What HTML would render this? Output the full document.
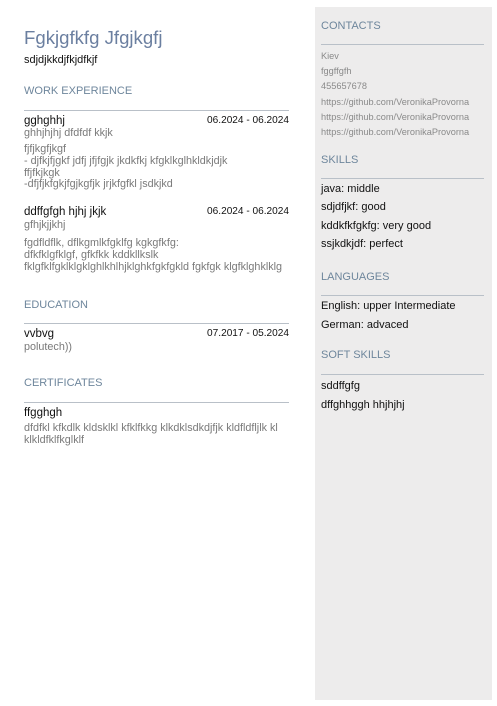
<!DOCTYPE html>
<html><head><meta charset="utf-8"><style>
body{margin:0;width:497px;height:706px;background:#fff;font-family:"Liberation Sans",sans-serif;position:relative;overflow:hidden}
.a{position:absolute;white-space:nowrap;line-height:12px}
.h{color:#6e869c;font-size:11px}
.ln{position:absolute;height:1px;background:#b9c0c8}
.t{color:#111;font-size:11.5px}
.d{position:absolute;right:208px;color:#111;font-size:10.1px;line-height:12px}
.g{color:#7a7a7a;font-size:10.8px}
.s{color:#8a8a8a;font-size:9.2px}
.k{color:#111;font-size:11px}
#side{position:absolute;left:315px;top:7px;width:177px;height:693px;background:#edecec}
</style></head><body>
<div id="side"></div>
<div class="a" style="left:24px;top:27px;font-size:18.6px;line-height:22px;color:#6b7fa0">Fgkjgfkfg Jfgjkgfj</div>
<div class="a" style="left:24px;top:54px;font-size:11px;color:#111">sdjdjkkdjfkjdfkjf</div>

<div class="a h" style="left:24px;top:85px">WORK EXPERIENCE</div>
<div class="ln" style="left:24px;top:110px;width:265px"></div>
<div class="a t" style="left:24px;top:115px">gghghhj</div>
<div class="d" style="top:115px">06.2024 - 06.2024</div>
<div class="a g" style="left:24px;top:127px">ghhjhjhj dfdfdf kkjk</div>
<div class="a g" style="left:24px;top:144px;line-height:11.8px">fjfjkgfjkgf<br>- djfkjfjgkf jdfj jfjfgjk jkdkfkj kfgklkglhkldkjdjk<br>ffjfkjkgk<br>-dfjfjkfgkjfgjkgfjk jrjkfgfkl jsdkjkd</div>
<div class="a t" style="left:24px;top:206px">ddffgfgh hjhj jkjk</div>
<div class="d" style="top:206px">06.2024 - 06.2024</div>
<div class="a g" style="left:24px;top:219px">gfhjkjjkhj</div>
<div class="a g" style="left:24px;top:237px;line-height:12px">fgdfldflk, dflkgmlkfgklfg kgkgfkfg:<br>dfkfklgfklgf, gfkfkk kddkllkslk<br>fklgfklfgklklgklghlkhlhjklghkfgkfgkld fgkfgk klgfklghklklg</div>

<div class="a h" style="left:24px;top:299px">EDUCATION</div>
<div class="ln" style="left:24px;top:323px;width:265px"></div>
<div class="a t" style="left:24px;top:328px">vvbvg</div>
<div class="d" style="top:328px">07.2017 - 05.2024</div>
<div class="a g" style="left:24px;top:341px">polutech))</div>

<div class="a h" style="left:24px;top:377px">CERTIFICATES</div>
<div class="ln" style="left:24px;top:402px;width:265px"></div>
<div class="a t" style="left:24px;top:407px">ffgghgh</div>
<div class="a g" style="left:24px;top:422px;line-height:12px">dfdfkl kfkdlk kldsklkl kfklfkkg klkdklsdkdjfjk kldfldfljlk kl<br>klkldfklfkglklf</div>

<div class="a h" style="left:321px;top:20px">CONTACTS</div>
<div class="ln" style="left:321px;top:44px;width:163px"></div>
<div class="a s" style="left:321px;top:49px;line-height:15.2px">Kiev<br>fggffgfh<br>455657678<br>https://github.com/VeronikaProvorna<br>https://github.com/VeronikaProvorna<br>https://github.com/VeronikaProvorna</div>

<div class="a h" style="left:321px;top:154px">SKILLS</div>
<div class="ln" style="left:321px;top:178px;width:163px"></div>
<div class="a k" style="left:321px;top:180px;line-height:18.3px">java: middle<br>sdjdfjkf: good<br>kddkfkfgkfg: very good<br>ssjkdkjdf: perfect</div>

<div class="a h" style="left:321px;top:271px">LANGUAGES</div>
<div class="ln" style="left:321px;top:295px;width:163px"></div>
<div class="a k" style="left:321px;top:297px;line-height:19px">English: upper Intermediate<br>German: advaced</div>

<div class="a h" style="left:321px;top:349px">SOFT SKILLS</div>
<div class="ln" style="left:321px;top:374px;width:163px"></div>
<div class="a k" style="left:321px;top:377px;line-height:19px">sddffgfg<br>dffghhggh hhjhjhj</div>
</body></html>
